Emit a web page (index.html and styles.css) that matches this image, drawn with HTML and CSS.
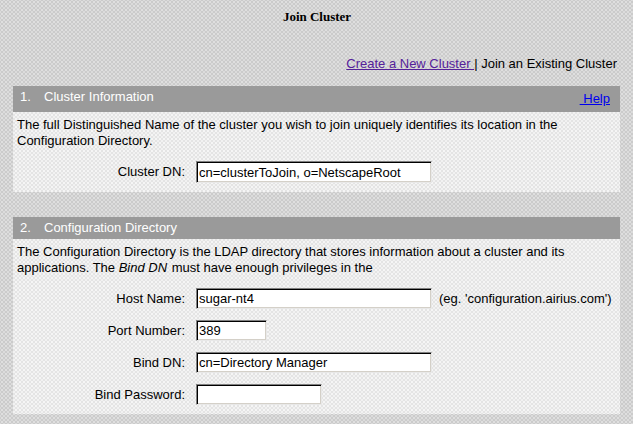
FILE: index.html
```html
<!DOCTYPE html>
<html>
<head>
<meta charset="utf-8">
<title>Join Cluster</title>
<link rel="stylesheet" href="styles.css">
</head>
<body>
<div class="page">
  <h1 class="title">Join Cluster</h1>
  <div class="switch"><a class="visited" href="#">Create a New Cluster </a>| Join an Existing Cluster</div>

  <section class="sect">
    <div class="sect-head tall">
      <span class="num">1.</span><span class="name">Cluster Information</span>
      <a class="help" href="#">&nbsp;Help</a>
    </div>
    <div class="sect-body">
      <p class="desc">The full Distinguished Name of the cluster you wish to join uniquely identifies its location in the Configuration Directory.</p>
      <div class="form">
        <label class="lbl">Cluster DN:</label>
        <input class="field w-long" type="text" value="cn=clusterToJoin, o=NetscapeRoot">
      </div>
    </div>
  </section>

  <section class="sect">
    <div class="sect-head">
      <span class="num">2.</span><span class="name">Configuration Directory</span>
    </div>
    <div class="sect-body">
      <p class="desc">The Configuration Directory is the LDAP directory that stores information about a cluster and its applications. The <i class="term">Bind DN</i> must have enough privileges in the</p>
      <div class="form">
        <label class="lbl">Host Name:</label>
        <div class="cell"><input class="field w-long" type="text" value="sugar-nt4"><span class="hint">(eg. 'configuration.airius.com')</span></div>
        <label class="lbl">Port Number:</label>
        <div class="cell"><input class="field w-port" type="text" value="389"></div>
        <label class="lbl">Bind DN:</label>
        <div class="cell"><input class="field w-long" type="text" value="cn=Directory Manager"></div>
        <label class="lbl">Bind Password:</label>
        <div class="cell"><input class="field w-pass" type="password" value=""></div>
      </div>
    </div>
  </section>
</div>
</body>
</html>
```
FILE: styles.css
```css
html, body {
  margin: 0;
  padding: 0;
}
body {
  background-color: #cbcbcb;
  background-image:
    radial-gradient(circle, #e0e0e0 0.7px, transparent 0.9px),
    radial-gradient(circle, #dcdcdc 0.7px, transparent 0.9px);
  background-size: 4px 4px, 4px 4px;
  background-position: 0 0, 2px 2px;
  font-family: "Liberation Sans", Arial, sans-serif;
  font-size: 13px;
  line-height: 16px;
  color: #000;
  height: 424px;
  overflow: hidden;
}
.page {
  padding: 9px 13px 0 13px;
}
.title {
  margin: 0;
  font-family: "Liberation Serif", "Times New Roman", serif;
  font-weight: bold;
  font-size: 13px;
  line-height: 16px;
  text-align: center;
  padding-left: 1px;
}
.switch {
  margin-top: 31px;
  text-align: right;
  padding-right: 3px;
  line-height: 16px;
}
.visited {
  color: #55219a;
  text-decoration: underline;
}
.sect {
  margin-top: 14px;
}
.sect + .sect {
  margin-top: 25px;
}
.sect-head {
  background: #9a9a9a;
  color: #fff;
  height: 22px;
  display: flex;
  align-items: center;
  padding: 0 10px 0 7px;
}
.sect-head.tall {
  height: 26px;
  align-items: flex-start;
  padding-top: 3px;
  box-sizing: border-box;
}
.num {
  width: 24px;
}
.name {
  flex: 1;
}
.help {
  color: #0000ee;
  text-decoration: underline;
  padding-top: 2px;
}
.sect-body {
  background-color: #e4e4e4;
  background-image:
    radial-gradient(circle, #f6f6f6 0.7px, transparent 0.9px),
    radial-gradient(circle, #f2f2f2 0.7px, transparent 0.9px);
  background-size: 4px 4px, 4px 4px;
  background-position: 1px 1px, 3px 3px;
  padding: 5px 8px 9px 4px;
}
.desc {
  margin: 0 0 12px 0;
}
.term {
  padding-right: 1px;
}
.form {
  display: grid;
  grid-template-columns: 168px auto;
  column-gap: 11px;
  row-gap: 11px;
  justify-content: start;
  align-items: center;
}
.lbl {
  text-align: right;
}
.cell {
  display: flex;
  align-items: center;
  gap: 7px;
}
.field {
  box-sizing: border-box;
  height: 21px;
  margin: 0;
  padding: 0 2px;
  font-family: inherit;
  font-size: 13px;
  color: #000;
  background: #fff;
  border-style: solid;
  border-width: 1px;
  border-color: #808080 #e8e8e8 #e8e8e8 #808080;
  box-shadow: inset 1px 1px 0 #000, inset -1px -1px 0 #d4d0c8;
  outline: none;
}
.sect-body > .form > .field {
  height: 22px;
}
.w-long { width: 236px; }
.w-port { width: 71px; }
.w-pass { width: 126px; }
.hint {
  white-space: nowrap;
}
```
